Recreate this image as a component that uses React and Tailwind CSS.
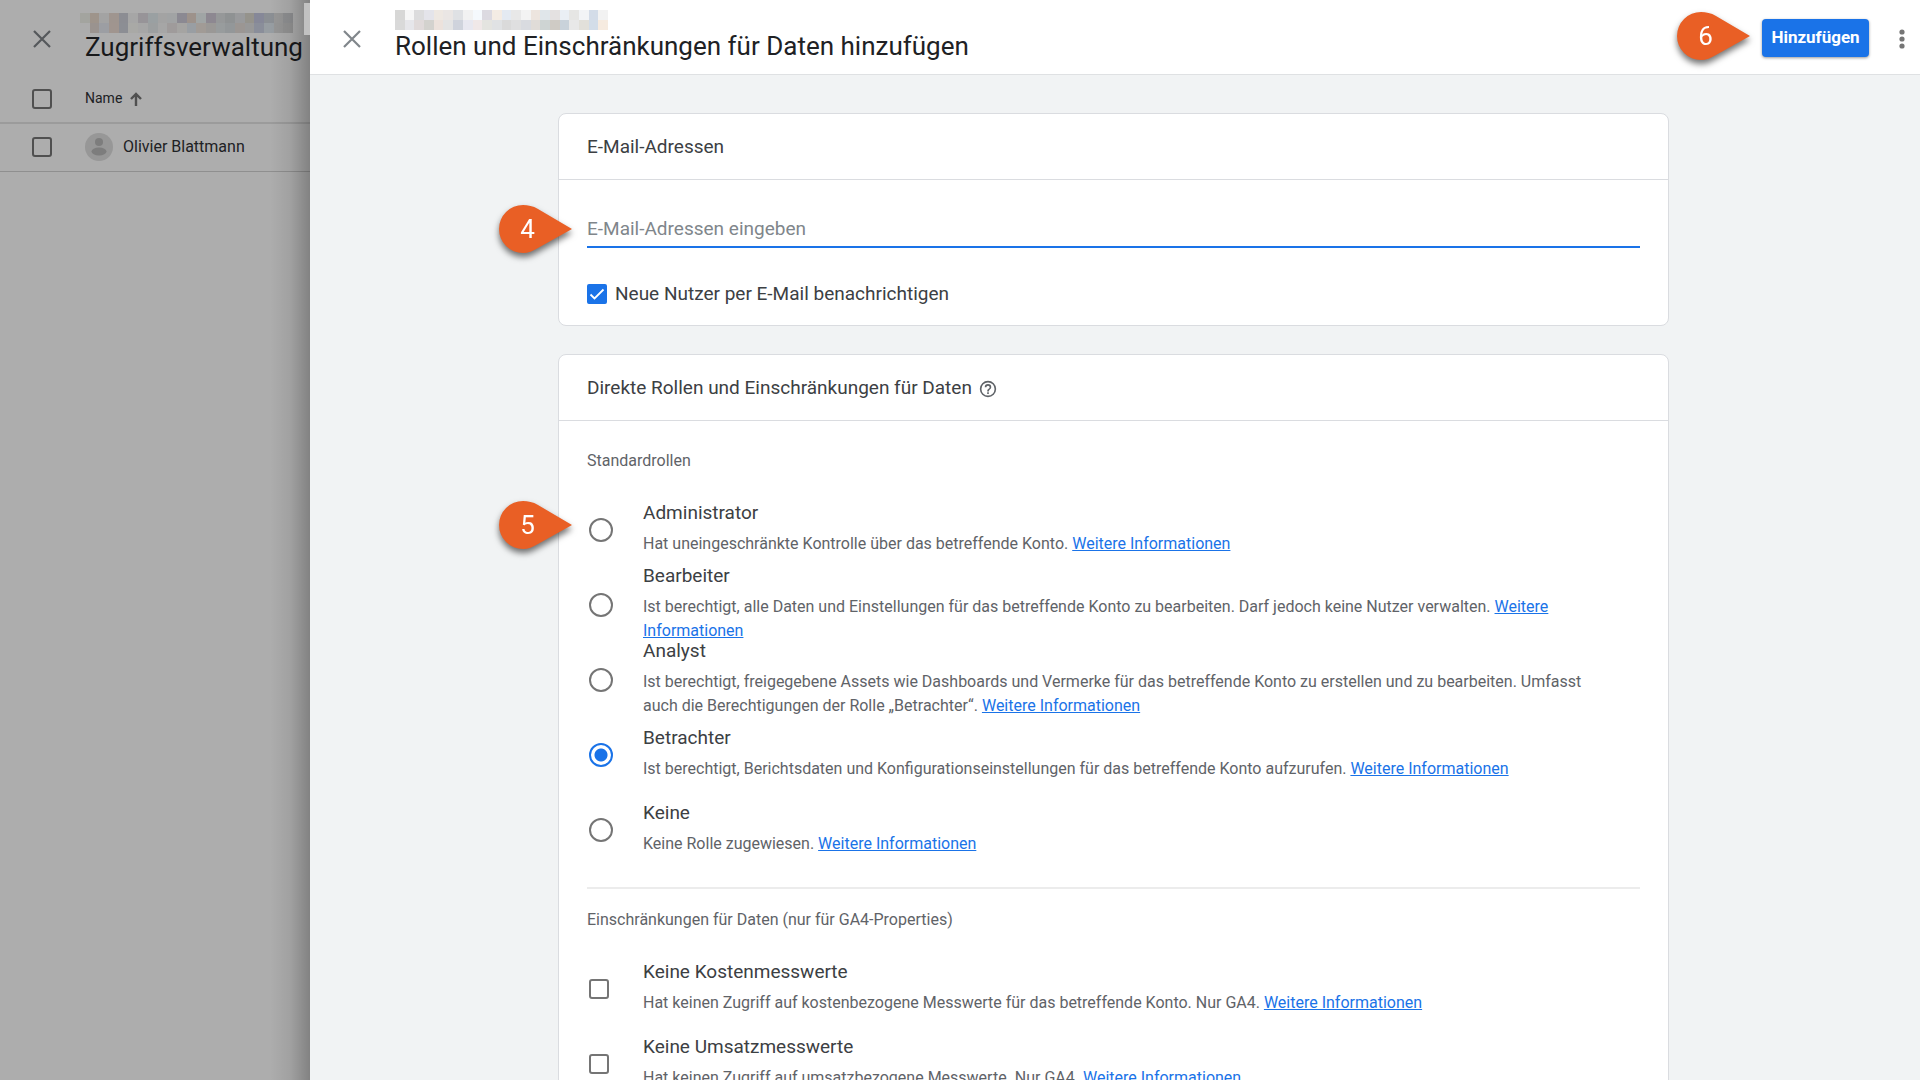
import React, { useState } from "react";

const roles = [
  {
    id: "admin",
    title: "Administrator",
    text: "Hat uneingeschränkte Kontrolle über das betreffende Konto.",
  },
  {
    id: "editor",
    title: "Bearbeiter",
    text: "Ist berechtigt, alle Daten und Einstellungen für das betreffende Konto zu bearbeiten. Darf jedoch keine Nutzer verwalten.",
  },
  {
    id: "analyst",
    title: "Analyst",
    text: "Ist berechtigt, freigegebene Assets wie Dashboards und Vermerke für das betreffende Konto zu erstellen und zu bearbeiten. Umfasst auch die Berechtigungen der Rolle „Betrachter“.",
  },
  {
    id: "viewer",
    title: "Betrachter",
    text: "Ist berechtigt, Berichtsdaten und Konfigurationseinstellungen für das betreffende Konto aufzurufen.",
  },
  {
    id: "none",
    title: "Keine",
    text: "Keine Rolle zugewiesen.",
  },
];

const restrictions = [
  {
    id: "cost",
    title: "Keine Kostenmesswerte",
    text: "Hat keinen Zugriff auf kostenbezogene Messwerte für das betreffende Konto. Nur GA4.",
  },
  {
    id: "revenue",
    title: "Keine Umsatzmesswerte",
    text: "Hat keinen Zugriff auf umsatzbezogene Messwerte. Nur GA4.",
  },
];

// Redacted account names, two rows of colour cells each
const maskedLeft = [
  ["#a3a49f", "#9e948b", "#a3a3a3", "#9f958f", "#8c8d93", "#a6a6a6", "#979498", "#9aa0a2", "#a3a3a3", "#a1a3a4", "#8b8992", "#9d928b", "#a0a5a5", "#8d8891", "#969899", "#8f9293", "#999a9c", "#95938c", "#868898", "#8b8f94", "#979797", "#8e8f91"],
  ["#acacac", "#9a938f", "#9c9ea3", "#a0958f", "#8c8e94", "#a9a9a6", "#a6a6a6", "#9c9fa0", "#a6a6a6", "#9f9b9b", "#a5a4a2", "#999ea3", "#a19b96", "#9a9896", "#989c9d", "#939799", "#9b9693", "#989898", "#8a8e9a", "#979da2", "#969696", "#929292"],
];
const maskedRight = [
  ["#d7d7d6", "#f6f6f6", "#dcdcdd", "#e4e4ea", "#eee8e2", "#eae6e4", "#dfe1e4", "#f2f2f2", "#f5f9fd", "#dcdae1", "#f4ece4", "#e4eaf2", "#e8e8e8", "#f3f3f3", "#ede5df", "#e0e6ea", "#e4e1e1", "#eaeff4", "#e6e6e4", "#f2f4f6", "#d3dce8", "#f2f2f2"],
  ["#d9d9d9", "#e6e6ea", "#e0dada", "#d3d2ce", "#ece2dc", "#e4e4e4", "#cfd3dc", "#e8e8f0", "#f0e8e8", "#e4e4e0", "#e0e2e4", "#dadada", "#dfdfe0", "#d9dbe0", "#e0dcd8", "#ced4d3", "#cfcbc5", "#c9d2da", "#e8e8e8", "#e2e0da", "#d3dde8", "#f6ebe0"],
];

const Masked = ({ rows }) => (
  <div className="w-[213px]" aria-hidden="true">
    {rows.map((row, i) => (
      <div key={i} className="flex h-[10px]">
        {row.map((color, j) => (
          <span key={j} className="flex-1" style={{ backgroundColor: color }} />
        ))}
      </div>
    ))}
  </div>
);

const CloseIcon = () => (
  <svg viewBox="0 0 18 18" className="size-[18px]" fill="none" stroke="currentColor" strokeWidth="2.2">
    <path d="M1 1l16 16M17 1L1 17" />
  </svg>
);

const Marker = ({ number }) => (
  <div className="relative h-12 w-[73px] drop-shadow-[0_4px_3px_rgba(0,0,0,0.55)]">
    <svg viewBox="0 0 73 48" className="h-12 w-[73px]">
      <path d="M24 0C29 0 34 1 39 4L73 24L39 43C34 46 29 48 24 48A24 24 0 0 1 24 0Z" fill="#e95f25" />
    </svg>
    <span className="absolute inset-y-0 left-0 flex w-[57px] items-center justify-center text-[26px] text-white">
      {number}
    </span>
  </div>
);

const Box = ({ label, className, ...rest }) => (
  <input
    type="checkbox"
    aria-label={label}
    className={`block size-5 shrink-0 appearance-none rounded-[3px] border-2 ${className}`}
    {...rest}
  />
);

const Option = ({ item, children }) => (
  <div className="flex h-[75px] items-center">
    <div className="flex w-14 shrink-0">{children}</div>
    <div className="pr-8 pb-[3px]">
      <label htmlFor={item.id} className="mb-[7px] block text-[19px] leading-6 text-[#3c4043]">
        {item.title}
      </label>
      <p className="text-[16px] leading-6 text-[#5f6368]">
        {item.text}{" "}
        <a href="#info" className="text-[#1a73e8] underline">
          Weitere Informationen
        </a>
      </p>
    </div>
  </div>
);

const Card = ({ title, children }) => (
  <section className="rounded-lg border border-[#dadce0] bg-white">
    <h2 className="flex h-[66px] items-center gap-[7px] border-b border-[#dadce0] px-7 pt-0.5 text-[19px] text-[#3c4043]">
      {title}
    </h2>
    <div className="px-7">{children}</div>
  </section>
);

const App = () => {
  const [role, setRole] = useState("viewer");
  const [notify, setNotify] = useState(true);

  return (
    <div className="flex h-screen overflow-hidden bg-[#adadad] font-[Roboto,sans-serif] text-[#202124]">
      <aside className="relative w-[310px] shrink-0 overflow-hidden">
        <div className="flex h-[75px] pl-[33px]">
          <button type="button" aria-label="Schließen" className="mt-[30px] h-[18px] text-[#55585b]">
            <CloseIcon />
          </button>
          <div className="ml-[29px] pt-[13px]">
            <Masked rows={maskedLeft} />
            <h1 className="pl-[5px] text-[26px] leading-7 whitespace-nowrap text-[#18191b]">
              Zugriffsverwaltung
            </h1>
          </div>
        </div>
        <table className="w-full">
          <thead>
            <tr className="h-12 border-b-2 border-[#9b9b9b]">
              <th className="w-[85px] pl-8 text-left">
                <Box label="Alle auswählen" className="border-[#505050]" />
              </th>
              <th className="text-left text-[14px] font-normal">
                <span className="flex items-center gap-2">
                  Name
                  <svg viewBox="0 0 12 14" className="h-[14px] w-3" fill="none" stroke="#505050" strokeWidth="2.4">
                    <path d="M6 14V2M1 7l5-5 5 5" />
                  </svg>
                </span>
              </th>
            </tr>
          </thead>
          <tbody>
            <tr className="h-12 border-b border-[#8f8f8f]">
              <td className="pl-8">
                <Box label="Olivier Blattmann" className="border-[#505050]" />
              </td>
              <td className="text-[16px]">
                <span className="flex items-center gap-[10px]">
                  <svg viewBox="0 0 28 28" className="size-7">
                    <circle cx="14" cy="14" r="14" fill="#979797" />
                    <circle cx="14" cy="9" r="4" fill="#7d7d7d" />
                    <ellipse cx="14" cy="18.500" rx="7.500" ry="4" fill="#7d7d7d" />
                  </svg>
                  Olivier Blattmann
                </span>
              </td>
            </tr>
          </tbody>
        </table>
        <div className="absolute inset-y-0 right-0 w-10 bg-linear-to-r from-transparent via-black/7 to-black/25" />
        <div className="absolute top-[3px] right-0 h-8 w-[6px] bg-[#c1c1c1]" />
      </aside>

      <main className="flex min-w-0 flex-1 flex-col bg-[#f1f3f4]">
        <header className="flex h-[75px] shrink-0 border-b border-[#dfe1e3] bg-white pl-[33px]">
          <button type="button" aria-label="Schließen" className="mt-[30px] h-[18px] text-[#80868b]">
            <CloseIcon />
          </button>
          <div className="ml-[34px] pt-[10px]">
            <Masked rows={maskedRight} />
            <h1 className="mt-[2px] text-[26px] leading-7 whitespace-nowrap">
              Rollen und Einschränkungen für Daten hinzufügen
            </h1>
          </div>
          <div className="mr-[15px] ml-auto flex items-start pt-3">
            <Marker number={6} />
            <button
              type="button"
              className="mt-[7px] ml-3 h-[38px] w-[107px] rounded bg-[#1a73e8] text-[17px] font-bold text-white shadow-[0_1px_3px_rgba(0,0,0,0.4)]"
            >
              Hinzufügen
            </button>
            <button type="button" aria-label="Mehr" className="mt-[17px] ml-[30px] text-[#757575]">
              <svg viewBox="0 0 6 20" className="h-5 w-[6px]" fill="currentColor">
                <circle cx="3" cy="3" r="2.600" />
                <circle cx="3" cy="10" r="2.600" />
                <circle cx="3" cy="17" r="2.600" />
              </svg>
            </button>
          </div>
        </header>

        <div className="min-h-0 flex-1 overflow-hidden pt-[38px] pr-[3px]">
          <form className="mx-auto flex w-full max-w-[1111px] flex-col gap-7">
            <Card title="E-Mail-Adressen">
              <div className="relative pt-7">
                <div className="absolute top-[25px] -left-[88px]">
                  <Marker number={4} />
                </div>
                <input
                  type="email"
                  aria-label="E-Mail-Adressen eingeben"
                  placeholder="E-Mail-Adressen eingeben"
                  className="block h-10 w-full border-b-2 border-[#1a73e8] pt-0.5 text-[19px] placeholder:text-[#80868b] focus:outline-none"
                />
              </div>
              <label className="flex items-center gap-2 pt-[34px] pb-[19px] text-[19px] leading-6 text-[#3c4043]">
                <span className="relative size-5">
                  <input
                    type="checkbox"
                    checked={notify}
                    onChange={(e) => setNotify(e.target.checked)}
                    className="block size-5 appearance-none rounded-[2px] border-2 border-[#757575] checked:border-[#1a73e8] checked:bg-[#1a73e8]"
                  />
                  {notify && (
                    <svg
                      viewBox="0 0 20 20"
                      className="pointer-events-none absolute inset-0 size-5"
                      fill="none"
                      stroke="#fff"
                      strokeWidth="1.800"
                    >
                      <path d="M3.500 10.500l4 4L16.500 5.500" />
                    </svg>
                  )}
                </span>
                Neue Nutzer per E-Mail benachrichtigen
              </label>
            </Card>

            <Card
              title={
                <>
                  Direkte Rollen und Einschränkungen für Daten
                  <svg viewBox="1 1 22 22" className="size-[18px]" fill="#5f6368">
                    <path d="M11 18h2v-2h-2v2zm1-16a10 10 0 1 0 0 20 10 10 0 0 0 0-20zm0 18a8 8 0 1 1 0-16 8 8 0 0 1 0 16zm0-14a4 4 0 0 0-4 4h2a2 2 0 1 1 4 0c0 2-3 1.750-3 5h2c0-2.250 3-2.500 3-5a4 4 0 0 0-4-4z" />
                  </svg>
                </>
              }
            >
              <div className="relative">
                <h3 className="pt-7 pb-[19px] text-[16px] leading-6 text-[#5f6368]">Standardrollen</h3>
                <div className="absolute top-20 -left-[88px]">
                  <Marker number={5} />
                </div>
                {roles.map((item) => (
                  <Option key={item.id} item={item}>
                    <input
                      id={item.id}
                      type="radio"
                      name="role"
                      checked={role === item.id}
                      onChange={() => setRole(item.id)}
                      className="ml-[2px] block size-6 appearance-none rounded-full border-2 border-[#757575] checked:border-[#1a73e8] checked:bg-[radial-gradient(circle,#1a73e8_6px,transparent_7px)]"
                    />
                  </Option>
                ))}
              </div>
              <div className="mt-5 border-t-2 border-[#ececec]">
                <h3 className="pt-[19px] pb-[19px] text-[16px] leading-6 text-[#5f6368]">
                  Einschränkungen für Daten (nur für GA4-Properties)
                </h3>
                {restrictions.map((item) => (
                  <Option key={item.id} item={item}>
                    <Box id={item.id} className="ml-[2px] border-[#757575]" />
                  </Option>
                ))}
              </div>
            </Card>
          </form>
        </div>
      </main>
    </div>
  );
};

export default App;
